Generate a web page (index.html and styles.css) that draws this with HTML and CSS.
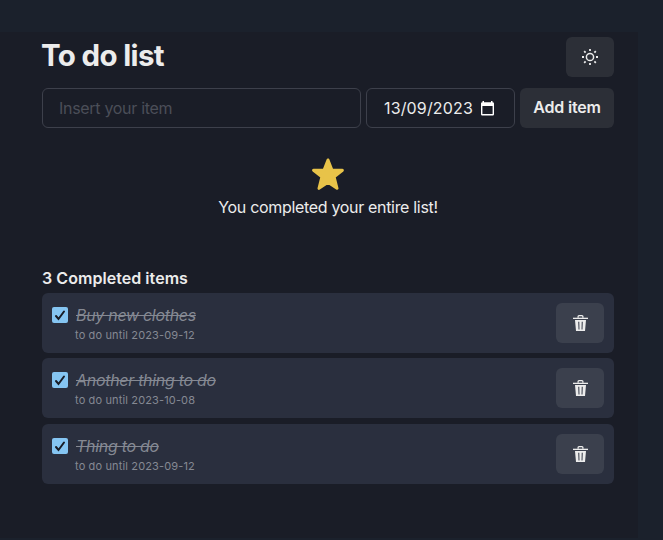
FILE: index.html
```html
<!DOCTYPE html>
<html lang="en">
<head>
<meta charset="utf-8">
<title>To do list</title>
<link rel="stylesheet" href="styles.css">
</head>
<body>
<svg class="defs" width="0" height="0" aria-hidden="true">
  <symbol id="trash" viewBox="0 0 15 16">
    <path d="M5.100 2.800V1.600q0-.9.9-.9h3q.9 0 .9.900v1.200" fill="none" stroke="currentColor" stroke-width="1.300"/>
    <path d="M0 2.700h15V4H0z" fill="currentColor"/>
    <path fill-rule="evenodd" d="M2 5h11l-1 11H3zM5.200 6.700l.3 7.800h1l-.2-7.800zM8.700 6.700l-.2 7.800h1l.3-7.800z" fill="currentColor"/>
  </symbol>
</svg>
<main class="app">
  <header class="header">
    <h1 class="title">To do list</h1>
    <button class="button theme" aria-label="Toggle theme">
      <svg width="18" height="18" viewBox="0 0 18 18" fill="none" stroke="currentColor" stroke-width="1.500">
        <circle cx="9" cy="9" r="3.600"/>
        <path stroke-width="1.800" d="M9 1v2M9 15v2M1 9h2M15 9h2M3.200 3.200l1.400 1.400M13.400 13.400l1.400 1.400M3.200 14.800l1.400-1.400M13.400 4.600l1.400-1.400"/>
      </svg>
    </button>
  </header>
  <form class="form">
    <div class="field name"><span class="placeholder">Insert your item</span></div>
    <div class="field date"><span class="date-text">13/09/2023</span>
      <svg width="13" height="15" viewBox="0 0 13 15"><path fill="#fff" fill-rule="evenodd" d="M1.500 0H3v1.300h7V0h1.500v1.300q1.500 0 1.500 1.300v10.700q0 1.200-1.200 1.200H1.200Q0 14.500 0 13.300V2.600q0-1.300 1.500-1.300zM1.400 5v8.100h10.200V5z"/></svg>
    </div>
    <button class="button add" type="button"><span class="add-text">Add item</span></button>
  </form>
  <section class="empty">
    <svg width="32" height="32" viewBox="0 0 32 32"><path fill="#e8c349" stroke="#e8c349" stroke-width="3" stroke-linejoin="round" d="M16 2l3.800 9.900 10.600.4-8.300 6.600 2.900 11.400L16 24.300l-9 6 2.900-11.400L1.600 12.300l10.600-.4z"/></svg>
    <p class="message">You completed your entire list!</p>
  </section>
  <h2 class="subtitle">3 Completed items</h2>
  <ul class="list">
    <li class="card">
      <span class="check"><svg width="16" height="16" viewBox="0 0 16 16"><path d="M4 9l2.500 3 5.500-7.500"/></svg></span>
      <div class="text"><span class="name-done">Buy new clothes</span><span class="due">to do until 2023-09-12</span></div>
      <button class="button delete" aria-label="Delete"><svg width="15" height="16"><use href="#trash"/></svg></button>
    </li>
    <li class="card">
      <span class="check"><svg width="16" height="16" viewBox="0 0 16 16"><path d="M4 9l2.500 3 5.500-7.500"/></svg></span>
      <div class="text"><span class="name-done">Another thing to do</span><span class="due">to do until 2023-10-08</span></div>
      <button class="button delete" aria-label="Delete"><svg width="15" height="16"><use href="#trash"/></svg></button>
    </li>
    <li class="card">
      <span class="check"><svg width="16" height="16" viewBox="0 0 16 16"><path d="M4 9l2.500 3 5.500-7.500"/></svg></span>
      <div class="text"><span class="name-done">Thing to do</span><span class="due">to do until 2023-09-12</span></div>
      <button class="button delete" aria-label="Delete"><svg width="15" height="16"><use href="#trash"/></svg></button>
    </li>
  </ul>
</main>
</body>
</html>
```
FILE: styles.css
```css
* { box-sizing: border-box; margin: 0; padding: 0; }
html { height: 100%; overflow: hidden; }
body {
  height: 540px;
  padding-top: 32px;
  overflow: hidden;
  background: #1b212c;
  color: #ececec;
  font: 400 16px/24px Inter, "Liberation Sans", sans-serif;
}
.defs { display: block; }
.app { width: 638px; height: 506px; padding: 5px 24px 0 42px; background: #1a1d27; }
.header { display: flex; justify-content: space-between; height: 40px; }
.title { margin-left: -1px; font-size: 29.5px; line-height: 37px; font-weight: 700; letter-spacing: -0.65px; }
.button {
  display: flex; align-items: center; justify-content: center;
  height: 40px; border: 0; border-radius: 6px;
  background: #2c2f37; color: #ececec; font: inherit;
}
.theme { width: 48px; }
.form { display: flex; gap: 5px; margin-top: 11px; }
.field { display: flex; align-items: center; height: 40px; border: 1px solid #3d404b; border-radius: 6px; }
.name { width: 319px; padding-left: 16px; color: #4b4e58; }
.date { width: 149px; padding-left: 17px; gap: 8px; }
.date-text { letter-spacing: 0.15px; }
.add { width: 94px; font-weight: 600; padding-bottom: 2px; }
.add-text { letter-spacing: -0.2px; }
.placeholder { letter-spacing: -0.3px; }
.empty { display: flex; flex-direction: column; align-items: center; margin-top: 30px; }
.empty svg { display: block; }
.message { margin-top: 5px; letter-spacing: -0.32px; }
.subtitle { margin-top: 47px; font-size: 16px; line-height: 24px; font-weight: 600; letter-spacing: 0.05px; }
.list { display: grid; gap: 5.4px; margin-top: 3px; list-style: none; }
.card { display: flex; height: 60px; padding: 10px; border-radius: 6px; background: #2a2f3e; }
.check { width: 16px; height: 16px; margin-top: 4px; border-radius: 2px; background: #85c5f2; }
.check svg { display: block; fill: none; stroke: #181c25; stroke-width: 2; stroke-linecap: round; }
.text { display: flex; flex-direction: column; flex: 1; margin-left: 7px; align-items: flex-start; }
.name-done { margin-left: 1px; color: #858993; font-style: italic; line-height: 24px; text-decoration: line-through; letter-spacing: -0.3px; }
.due { color: #858993; font-size: 11px; line-height: 16px; letter-spacing: 0.14px; }
.delete { width: 48px; background: #3b404d; }
```
